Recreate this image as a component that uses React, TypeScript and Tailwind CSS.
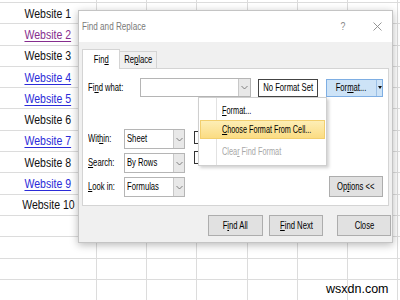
import React from "react";

const F = { fontFamily: '"Liberation Sans", Arial, sans-serif' };

function U({ children }: { children: React.ReactNode }) {
  return <span className="underline underline-offset-[1px]">{children}</span>;
}

function T({
  children,
  c = false,
  s = "scale-x-[0.73]",
  x = "",
}: {
  children: React.ReactNode;
  c?: boolean;
  s?: string;
  x?: string;
}) {
  return (
    <span className={`inline-block whitespace-nowrap ${s} ${c ? "origin-center" : "origin-left"} ${x}`}>
      {children}
    </span>
  );
}

const rows = [
  { t: "Website 1", c: "text-[#111]" },
  { t: "Website 2", c: "text-[#862d8e] underline underline-offset-[2px]" },
  { t: "Website 3", c: "text-[#111]" },
  { t: "Website 4", c: "text-[#2b2bd8] underline underline-offset-[2px]" },
  { t: "Website 5", c: "text-[#2b2bd8] underline underline-offset-[2px]" },
  { t: "Website 6", c: "text-[#111]" },
  { t: "Website 7", c: "text-[#2b2bd8] underline underline-offset-[2px]" },
  { t: "Website 8", c: "text-[#111]" },
  { t: "Website 9", c: "text-[#2b2bd8] underline underline-offset-[2px]" },
  { t: "Website 10", c: "text-[#111]" },
  { t: "", c: "" },
  { t: "", c: "" },
  { t: "", c: "" },
  { t: "", c: "" },
];

function GridRow({ t, c, h }: { t: string; c: string; h: string }) {
  return (
    <div className={`flex border-b border-[#dcdcdc] ${h}`}>
      <div className="w-[97px] shrink-0 border-r border-[#dcdcdc] flex items-center justify-center text-[13px] leading-none">
        <T c s="scale-x-[0.81]" x={c}>
          {t}
        </T>
      </div>
      {[0, 1, 2, 3, 4, 5].map((i) => (
        <div key={i} className="w-[50.2px] shrink-0 border-r border-[#dcdcdc]" />
      ))}
    </div>
  );
}

function Chevron() {
  return (
    <svg width="7" height="5" viewBox="0 0 7 5">
      <path d="M0.5 1 L3.5 4 L6.5 1" fill="none" stroke="#666" strokeWidth="0.8" />
    </svg>
  );
}

function Select({ label }: { label: string }) {
  return (
    <div className="flex h-[20px] w-[61px] border border-[#b5b5b5] bg-white">
      <div className="flex-1 flex items-center pl-[2px] text-[10.5px] text-black overflow-hidden">
        <T>{label}</T>
      </div>
      <div className="w-[11px] border-l border-[#c8c8c8] bg-[#e8e8e8] flex items-center justify-center">
        <Chevron />
      </div>
    </div>
  );
}

function Btn({ children, w }: { children: React.ReactNode; w: string }) {
  return (
    <div
      className={`${w} h-[21px] border border-[#adadad] bg-[#e1e1e1] flex items-center justify-center text-[10.5px] text-black`}
    >
      <T c>{children}</T>
    </div>
  );
}

export default function App() {
  return (
    <div className="relative w-[400px] h-[300px] overflow-hidden bg-white" style={F}>
      {/* spreadsheet grid */}
      <div className="flex flex-col">
        <GridRow t="" c="" h="h-[3px]" />
        {rows.map((r, i) => (
          <GridRow key={i} t={r.t} c={r.c} h="h-[21.3px]" />
        ))}
      </div>

      {/* watermark */}
      <div className="absolute left-[326px] top-[281px] text-[12.5px] leading-[16px] text-black">wsxdn.com</div>

      {/* dialog */}
      <div className="absolute left-[78px] top-[10px] w-[315px] h-[233px] bg-[#f0f0f0] border border-[#c4c4c4] shadow-[0_2px_8px_rgba(0,0,0,0.28)] flex flex-col">
        {/* title bar */}
        <div className="h-[31px] bg-white flex items-center pl-[3px] pr-[10px] shrink-0">
          <span className="text-[11px] text-[#7a7a7a]">
            <T s="scale-x-[0.74]">Find and Replace</T>
          </span>
          <span className="ml-auto text-[11px] text-[#8a8a8a]">
            <T c s="scale-x-[0.8]">?</T>
          </span>
          <svg className="ml-[27px]" width="9" height="9" viewBox="0 0 9 9">
            <path d="M0.5 0.5 L8.5 8.5 M8.5 0.5 L0.5 8.5" stroke="#8a8a8a" strokeWidth="0.9" />
          </svg>
        </div>

        {/* tabs */}
        <div className="flex items-end pl-[3px] h-[26px] shrink-0">
          <div className="w-[38px] h-[20px] bg-white border border-b-0 border-[#d4d4d4] flex items-center justify-center text-[10.5px] text-black -mb-px relative z-10">
            <T c>
              Fin<U>d</U>
            </T>
          </div>
          <div className="w-[37px] h-[17px] bg-[#f0f0f0] border border-l-0 border-b-0 border-[#d4d4d4] flex items-center justify-center text-[10.5px] text-black">
            <T c>
              Re<U>p</U>lace
            </T>
          </div>
        </div>

        {/* panel */}
        <div className="mx-[3px] h-[138px] bg-white border border-[#d4d4d4] pl-[5px] pr-[5px] pt-[9px] shrink-0 flex flex-col">
          {/* find what row */}
          <div className="flex items-center h-[19px]">
            <div className="w-[52px] text-[10.5px] text-black">
              <T>
                Fi<U>n</U>d what:
              </T>
            </div>
            <div className="w-[111px] h-[19px] border border-[#b5b5b5] flex">
              <div className="flex-1" />
              <div className="w-[12px] border-l border-[#c8c8c8] bg-[#e8e8e8] flex items-center justify-center">
                <Chevron />
              </div>
            </div>
            <div className="ml-[7px] w-[60px] h-[18px] border border-[#444] flex items-center justify-center text-[10.5px] text-black">
              <T c>No Format Set</T>
            </div>
            <div className="ml-[8px] w-[57px] h-[18px] border border-[#7eaee3] bg-[#cde3f7] flex">
              <div className="flex-1 flex items-center justify-center text-[10.5px] text-black">
                <T c>
                  For<U>m</U>at...
                </T>
              </div>
              <div className="w-[6px] border-l border-[#9cc0e6] flex items-center justify-center">
                <svg width="4" height="3" viewBox="0 0 4 3">
                  <path d="M0 0 L4 0 L2 3 Z" fill="#111" />
                </svg>
              </div>
            </div>
          </div>

          {/* options rows */}
          <div className="flex mt-[32px]">
            <div className="flex flex-col gap-[4px]">
              {[
                [
                  <>
                    Wit<U>h</U>in:
                  </>,
                  "Sheet",
                ],
                [
                  <>
                    <U>S</U>earch:
                  </>,
                  "By Rows",
                ],
                [
                  <>
                    <U>L</U>ook in:
                  </>,
                  "Formulas",
                ],
              ].map(([l, v], i) => (
                <div key={i} className="flex items-center">
                  <div className="w-[36px] text-[10.5px] text-black">
                    <T>{l}</T>
                  </div>
                  <Select label={v as string} />
                </div>
              ))}
            </div>
            <div className="ml-[9px] flex flex-col gap-[7px] pt-[2px]">
              <div className="w-[13px] h-[13px] border border-[#333] bg-white" />
              <div className="w-[13px] h-[13px] border border-[#333] bg-white" />
            </div>
            <div className="ml-auto self-end">
              <div className="w-[54px] h-[21px] border border-[#adadad] bg-[#e1e1e1] flex items-center justify-center text-[10.5px] text-black">
                <T c>
                  Op<U>t</U>ions &lt;&lt;
                </T>
              </div>
            </div>
          </div>
        </div>

        {/* buttons */}
        <div className="flex mt-[9px] pl-[129px] gap-[6px]">
          <Btn w="w-[55px]">
            F<U>i</U>nd All
          </Btn>
          <Btn w="w-[54px]">
            <U>F</U>ind Next
          </Btn>
          <div className="ml-[8px]">
            <Btn w="w-[54px]">Close</Btn>
          </div>
        </div>

        {/* dropdown menu */}
        <div className="absolute left-[119px] top-[86px] w-[129px] h-[69px] bg-white border border-[#cfcfcf] shadow-[2px_2px_3px_rgba(0,0,0,0.18)] flex flex-col pt-[3px] px-[1px] z-20">
          <div className="absolute left-[17px] top-0 bottom-0 w-px bg-[#e2e2e2]" />
          <div className="h-[19px] flex items-center pl-[22px] text-[10.5px] text-black">
            <T s="scale-x-[0.7]">
              <U>F</U>ormat...
            </T>
          </div>
          <div className="h-[19px] flex items-center pl-[21px] text-[10.5px] text-black bg-gradient-to-b from-[#fdeeb5] to-[#fbdc82] border border-[#f2cf6e] relative">
            <T s="scale-x-[0.69]">
              <U>C</U>hoose Format From Cell...
            </T>
          </div>
          <div className="h-[26px] flex items-center pl-[22px] text-[10.5px] text-[#a8a8a8]">
            <T s="scale-x-[0.7]">
              Clea<U>r</U> Find Format
            </T>
          </div>
        </div>
      </div>
    </div>
  );
}
